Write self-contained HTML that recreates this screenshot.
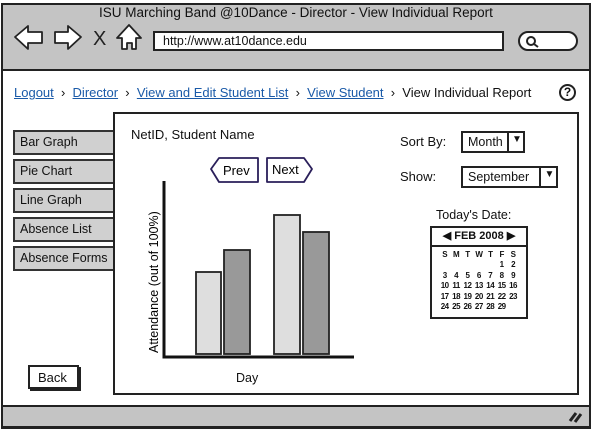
<!DOCTYPE html>
<html><head><style>
*{margin:0;padding:0;box-sizing:border-box}
body{width:592px;height:433px;background:#fff;position:relative;overflow:hidden;font-family:"Liberation Sans",sans-serif;font-size:13px;color:#111}
.a{position:absolute}
.tab{position:absolute;left:13px;width:101px;height:25px;background:#d0d0d0;border:2px solid #333;border-right:none;padding:3px 5px;font-size:12.5px}
a{color:#1a5aa8;text-decoration:underline}
.cal{position:absolute;left:439px;top:250px;width:80px;display:grid;grid-template-columns:repeat(7,11.4px);grid-auto-rows:10.4px;font-size:8px;font-weight:bold;text-align:center;line-height:10.4px;letter-spacing:-0.5px}
</style></head><body>
<div class="a" style="left:1px;top:3px;width:590px;height:426px;border:2px solid #222"></div>
<div class="a" style="left:1px;top:3px;width:590px;height:68px;background:#c4c4c4;border:2px solid #222"></div>
<div class="a" style="left:0;top:5px;width:592px;text-align:center;font-size:13.5px">ISU Marching Band @10Dance - Director - View Individual Report</div>
<svg class="a" style="left:0;top:20px" width="150" height="40" viewBox="0 0 150 40">
<g fill="#fff" stroke="#222" stroke-width="1.8" stroke-linejoin="round">
<path d="M15 17 L28 6 L28 12 L42 12 L42 23 L28 23 L28 29 Z"/>
<path d="M81 17 L68 6 L68 12 L55 12 L55 23 L68 23 L68 29 Z"/>
<path d="M117 18 L129 5 L141 18 L136 18 L136 29 L132 29 L132 23 L127 23 L127 29 L122 29 L122 18 Z"/>
</g>
<text x="93" y="25" font-family="Liberation Sans" font-size="20" fill="#222">X</text>
</svg>
<div class="a" style="left:153px;top:31px;width:351px;height:20px;background:#fff;border:2px solid #222;padding:1px 8px;font-size:12.5px">http://www.at10dance.edu</div>
<div class="a" style="left:518px;top:31px;width:60px;height:20px;background:#fff;border:2px solid #222;border-radius:10px"></div>
<svg class="a" style="left:525px;top:35px" width="16" height="14"><circle cx="6" cy="6" r="4" fill="none" stroke="#222" stroke-width="2"/><path d="M9 9 L13 12" stroke="#222" stroke-width="2"/></svg>

<div class="a" style="left:14px;top:85px;font-size:13px;white-space:nowrap"><a>Logout</a> &nbsp;›&nbsp; <a>Director</a> &nbsp;›&nbsp; <a>View and Edit Student List</a> &nbsp;›&nbsp; <a>View Student</a> &nbsp;›&nbsp; View Individual Report</div>
<div class="a" style="left:559px;top:84px;width:17px;height:17px;border:2px solid #222;border-radius:50%;font-size:12px;font-weight:bold;text-align:center;line-height:13px">?</div>

<div class="tab" style="top:130px">Bar Graph</div>
<div class="tab" style="top:159px">Pie Chart</div>
<div class="tab" style="top:188px">Line Graph</div>
<div class="tab" style="top:217px">Absence List</div>
<div class="tab" style="top:246px">Absence Forms</div>
<div class="a" style="left:28px;top:365px;width:51px;height:24px;border:2px solid #222;box-shadow:2px 2px 0 #222;padding:3px 8px;font-size:13px;background:#fff">Back</div>

<div class="a" style="left:113px;top:112px;width:466px;height:283px;border:2px solid #222;background:#fff"></div>
<div class="a" style="left:131px;top:127px">NetID, Student Name</div>
<svg class="a" style="left:205px;top:155px" width="115" height="30">
<path d="M6 14 L14 3 L53 3 L53 27 L14 27 Z" fill="#fff" stroke="#2a1f5a" stroke-width="1.8" stroke-linejoin="round"/>
<path d="M62 3 L99 3 L107 14 L99 27 L62 27 Z" fill="#fff" stroke="#2a1f5a" stroke-width="1.8" stroke-linejoin="round"/>
<text x="18" y="20" font-family="Liberation Sans" font-size="13">Prev</text>
<text x="67" y="19" font-family="Liberation Sans" font-size="13">Next</text>
</svg>
<svg class="a" style="left:140px;top:175px" width="220" height="190">
<path d="M24 6 L24 182 L214 182" fill="none" stroke="#111" stroke-width="3"/>
<rect x="56" y="97" width="25" height="82" fill="#dedede" stroke="#222" stroke-width="1.8"/>
<rect x="84" y="75" width="26" height="104" fill="#999" stroke="#222" stroke-width="1.8"/>
<rect x="134" y="40" width="26" height="139" fill="#dedede" stroke="#222" stroke-width="1.8"/>
<rect x="163" y="57" width="26" height="122" fill="#999" stroke="#222" stroke-width="1.8"/>
<text transform="translate(18,178) rotate(-90)" font-family="Liberation Sans" font-size="12.5">Attendance (out of 100%)</text>
</svg>
<div class="a" style="left:236px;top:371px;font-size:12.5px">Day</div>

<div class="a" style="left:400px;top:134px">Sort By:</div>
<div class="a" style="left:461px;top:131px;width:64px;height:22px;border:2px solid #222;padding:2px 5px;font-size:12.5px">Month</div>
<div class="a" style="left:507px;top:131px;width:18px;height:22px;border-left:2px solid #222;font-size:10px;text-align:center;line-height:18px">▼</div>
<div class="a" style="left:400px;top:169px">Show:</div>
<div class="a" style="left:461px;top:166px;width:97px;height:22px;border:2px solid #222;padding:2px 5px;font-size:12.5px">September</div>
<div class="a" style="left:539px;top:166px;width:19px;height:22px;border-left:2px solid #222;font-size:10px;text-align:center;line-height:18px">▼</div>
<div class="a" style="left:436px;top:208px;font-size:12.5px">Today's Date:</div>
<div class="a" style="left:430px;top:226px;width:98px;height:93px;border:2px solid #222"></div>
<div class="a" style="left:430px;top:226px;width:98px;height:21px;border:2px solid #222;font-size:11px;font-weight:bold;text-align:center;line-height:17px">◀ FEB 2008 ▶</div>
<div class="cal">
<span>S</span><span>M</span><span>T</span><span>W</span><span>T</span><span>F</span><span>S</span>
<span></span><span></span><span></span><span></span><span></span><span>1</span><span>2</span>
<span>3</span><span>4</span><span>5</span><span>6</span><span>7</span><span>8</span><span>9</span>
<span>10</span><span>11</span><span>12</span><span>13</span><span>14</span><span>15</span><span>16</span>
<span>17</span><span>18</span><span>19</span><span>20</span><span>21</span><span>22</span><span>23</span>
<span>24</span><span>25</span><span>26</span><span>27</span><span>28</span><span>29</span><span></span>
</div>

<div class="a" style="left:1px;top:405px;width:590px;height:23px;background:#c4c4c4;border:2px solid #222"></div>
<svg class="a" style="left:568px;top:410px" width="16" height="14"><path d="M2 11 L8 3 M7 12 L13 4" stroke="#222" stroke-width="3"/></svg>
</body></html>
